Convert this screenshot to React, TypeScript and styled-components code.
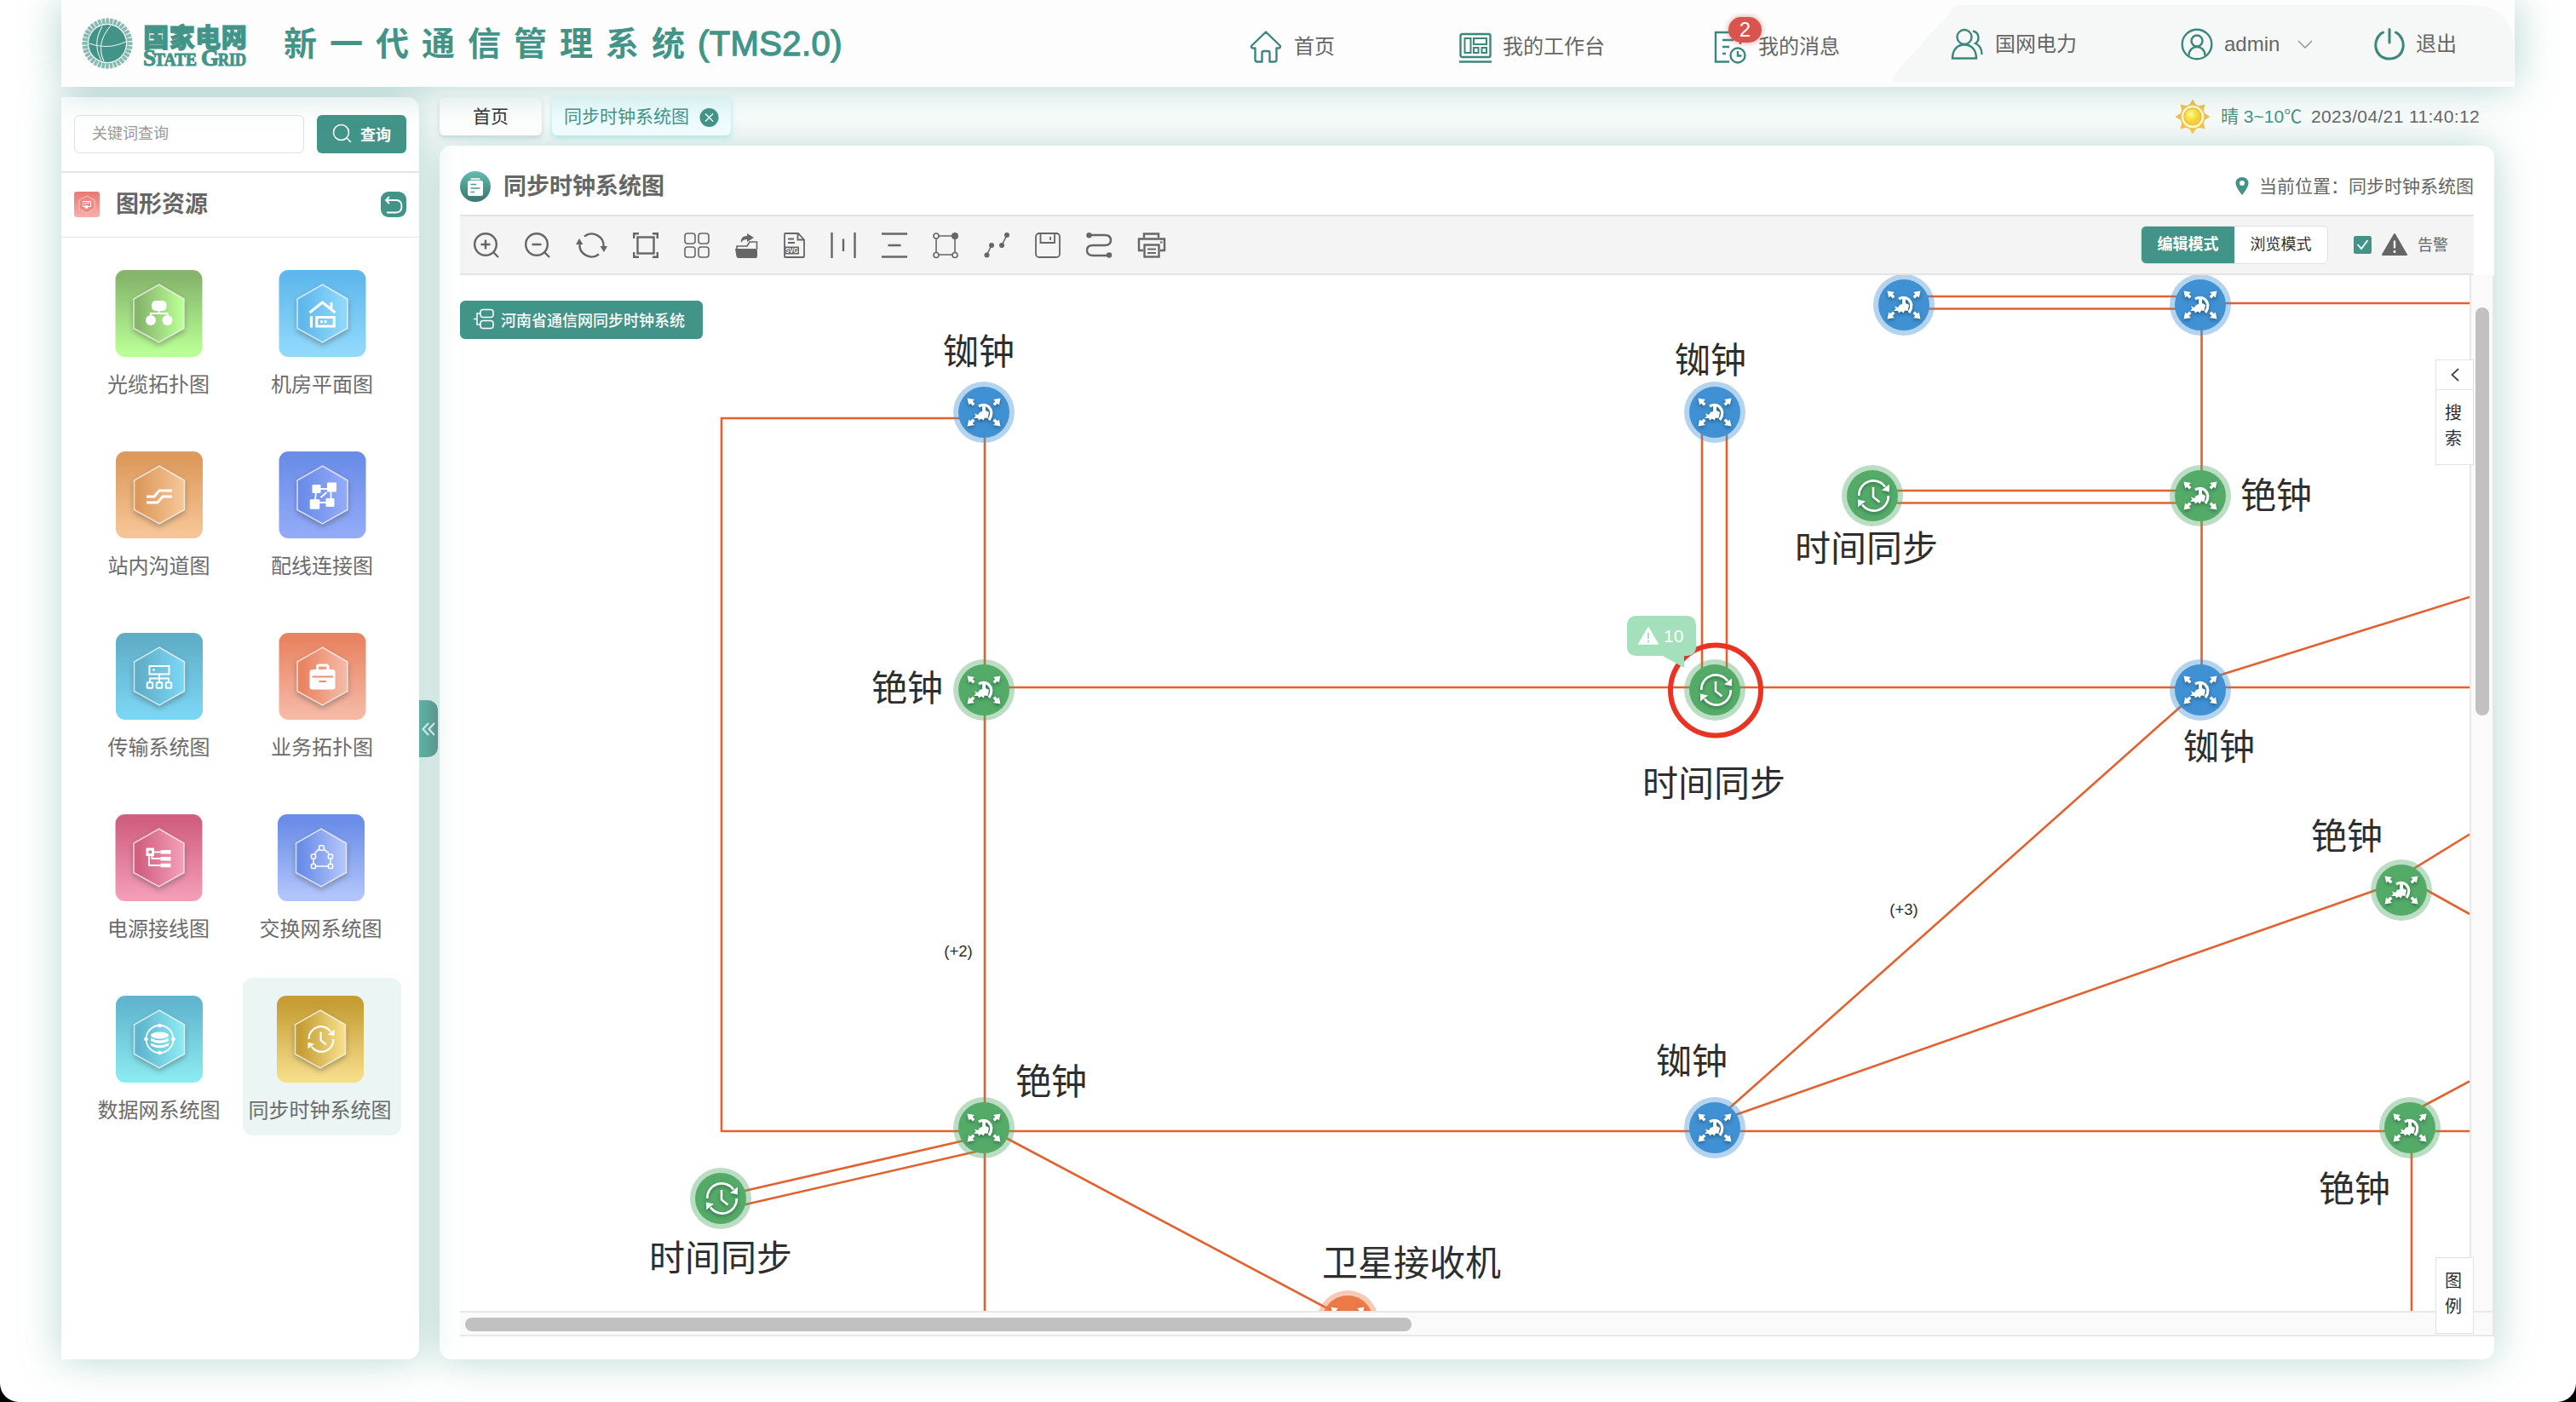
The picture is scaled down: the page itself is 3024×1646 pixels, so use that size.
import React from "react";
import styled, { createGlobalStyle, css } from "styled-components";

const TEAL = "#439488";
const INK = "#666666";

const GlobalStyle = createGlobalStyle`
  *, *::before, *::after { box-sizing: border-box; }
  html { background: #000; }
  body { margin: 0; font-family: "Liberation Sans", "Noto Sans CJK SC", sans-serif; color: ${INK}; }
`;

const Window = styled.div`
  height: 1646px;
  padding: 0 72px;
  display: flex;
  flex-direction: column;
  background: #fff;
  border-radius: 0 0 22px 22px;
  overflow: hidden;
`;

/* ---------- header ---------- */

const Header = styled.header`
  position: relative;
  z-index: 2;
  flex: none;
  height: 102px;
  display: flex;
  align-items: center;
  background: #fdfdfd;
  box-shadow: 0 0 48px rgba(67, 149, 136, 0.42);
`;

const Logo = styled.svg`
  flex: none;
  width: 200px;
  height: 80px;
  margin-left: 20px;
`;

const SystemTitle = styled.h1`
  margin: 0 0 0 41px;
  width: 1134px;
  font-size: 39px;
  line-height: 60px;
  font-weight: 700;
  color: ${TEAL};
  white-space: nowrap;
`;

const SpacedName = styled.span`
  letter-spacing: 15px;
`;

const Version = styled.span`
  font-size: 40px;
  font-weight: 400;
  -webkit-text-stroke: 1.3px ${TEAL};
  letter-spacing: 0.4px;
`;

const NavLink = styled.a<{ $gap: number; $width: number }>`
  flex: none;
  width: ${(p) => p.$width}px;
  display: flex;
  align-items: center;
  gap: ${(p) => p.$gap}px;
  margin-top: 8px;
  font-size: 24px;
  line-height: 36px;
  white-space: nowrap;
`;

const HeaderIcon = styled.svg`
  flex: none;
  width: 38px;
  height: 38px;
  fill: none;
  stroke: #3b877c;
  stroke-width: 2.4;
  overflow: visible;
`;

const IconHolder = styled.span`
  position: relative;
  display: flex;
`;

const Badge = styled.b`
  position: absolute;
  left: 17px;
  top: -16px;
  width: 39px;
  height: 30px;
  border-radius: 15px;
  background: #d9534f;
  box-shadow: 0 0 6px rgba(217, 83, 79, 0.6);
  color: #fff;
  font-size: 24px;
  font-weight: 400;
  line-height: 30px;
  text-align: center;
`;

const UserArea = styled.div`
  position: relative;
  flex: 1;
  height: 90px;
  display: flex;
  align-items: center;
  padding-left: 69px;
`;

const UserShape = styled.svg`
  position: absolute;
  left: 0;
  top: 0;
  width: 730px;
  height: 90px;
`;

const UserLink = styled.a<{ $width: number; $gap?: number }>`
  position: relative;
  flex: none;
  width: ${(p) => p.$width}px;
  display: flex;
  align-items: center;
  gap: ${(p) => p.$gap ?? 14}px;
  font-size: 24px;
  line-height: 36px;
  margin-top: 2px;
  white-space: nowrap;
`;

const Caret = styled.svg`
  width: 18px;
  height: 10px;
  margin-left: 8px;
  fill: none;
  stroke: #999;
  stroke-width: 1.6;
`;

/* ---------- body ---------- */

const Body = styled.div`
  flex: none;
  display: flex;
  height: 1544px;
  padding: 12px 0 50px;
  gap: 24px;
`;

const Sidebar = styled.aside`
  position: relative;
  flex: none;
  width: 420px;
  display: flex;
  flex-direction: column;
  background: #fff;
  border-radius: 0 14px 14px 0;
  box-shadow: 0 0 48px rgba(67, 149, 136, 0.38);
`;

const SearchRow = styled.div`
  display: flex;
  gap: 15px;
  padding: 21px 15px;
  height: 89px;
  border-bottom: 2px solid #e4e4e4;
`;

const SearchField = styled.div`
  width: 270px;
  height: 45px;
  padding-left: 20px;
  border: 1px solid #e2e2e2;
  border-radius: 6px;
  color: #999;
  font-size: 18px;
  line-height: 43px;
`;

const SearchButton = styled.button`
  width: 105px;
  height: 45px;
  padding: 0 0 2px 18px;
  border: 0;
  border-radius: 6px;
  display: flex;
  align-items: center;
  gap: 10px;
  background: ${TEAL};
  color: #fff;
  font: 700 18px "Liberation Sans", "Noto Sans CJK SC", sans-serif;
  white-space: nowrap;
`;

const SectionHead = styled.div`
  display: flex;
  align-items: center;
  height: 76px;
  padding: 0 15px 2px;
  border-bottom: 1.5px solid #e4e4e4;
`;

const SectionTitle = styled.h2`
  flex: 1;
  margin: 0 0 0 19px;
  font-size: 27px;
  line-height: 40px;
  font-weight: 700;
  color: ${INK};
`;

const Square30 = styled.svg`
  flex: none;
  width: 30px;
  height: 30px;
`;

const TileGrid = styled.div`
  display: grid;
  grid-template-columns: 186px 186px;
  grid-auto-rows: 185px;
  gap: 28px 5px;
  padding: 17px 0 0 22px;
`;

const TileCell = styled.div<{ $active?: boolean; $shift: number }>`
  display: flex;
  flex-direction: column;
  align-items: center;
  padding-top: 21px;
  border-radius: 12px;
  font-size: 24px;
  line-height: 36px;
  color: #6c6c6c;
  white-space: nowrap;
  ${(p) => p.$active && css`background: #ebf5f3;`}
  > * {
    transform: translateX(${(p) => p.$shift}px);
  }
`;

const TileArt = styled.svg`
  width: 103px;
  height: 102px;
  margin-bottom: 15px;
  display: block;
`;

const CollapseHandle = styled.div`
  position: absolute;
  left: 420px;
  top: 708px;
  width: 22px;
  height: 67px;
  border-radius: 0 12px 12px 0;
  background: linear-gradient(90deg, #5eb2a6, #5c958c);
  display: flex;
  align-items: center;
  justify-content: center;
`;

/* ---------- content ---------- */

const Content = styled.main`
  flex: none;
  width: 2412px;
  display: flex;
  flex-direction: column;
  gap: 12px;
`;

const TabRow = styled.div`
  position: relative;
  z-index: 1;
  display: flex;
  align-items: center;
  height: 45px;
  gap: 12px;
`;

const Tab = styled.div<{ $active?: boolean }>`
  flex: none;
  width: ${(p) => (p.$active ? 210 : 120)}px;
  height: 45px;
  display: flex;
  align-items: center;
  justify-content: center;
  gap: 12px;
  border-radius: 6px;
  font-size: 21px;
  line-height: 44px;
  white-space: nowrap;
  color: ${(p) => (p.$active ? TEAL : "#303030")};
  background: ${(p) => (p.$active ? "#effdff" : "#fefefe")};
  box-shadow: 0 3px 6px ${(p) => (p.$active ? "rgba(110, 220, 215, 0.5)" : "rgba(67, 149, 136, 0.28)")};
`;

const Weather = styled.div`
  flex: 1;
  display: flex;
  align-items: center;
  justify-content: flex-end;
  padding-right: 17px;
  font-size: 21px;
  line-height: 45px;
  white-space: nowrap;
`;

const Sun = styled.svg`
  width: 44px;
  height: 44px;
  margin-right: 11px;
`;

const Forecast = styled.span`
  width: 106px;
  color: ${TEAL};
`;

const Clock = styled.span`
  width: 198px;
  letter-spacing: 0.36px;
`;

const Panel = styled.section`
  flex: 1;
  display: flex;
  flex-direction: column;
  background: #fff;
  border-radius: 14px;
  box-shadow: 0 0 48px rgba(67, 149, 136, 0.38);
`;

const PanelHead = styled.div`
  height: 81px;
  display: flex;
  align-items: center;
  padding: 14px 24px 0;
`;

const PanelTitle = styled.h2`
  flex: 1;
  margin: 0 0 0 15px;
  font-size: 27px;
  line-height: 40px;
  font-weight: 700;
  color: ${INK};
`;

const Location = styled.div`
  display: flex;
  align-items: center;
  gap: 12px;
  font-size: 21px;
  line-height: 32px;
  white-space: nowrap;
`;

const Toolbar = styled.div`
  flex: none;
  margin: 0 24px;
  height: 71px;
  display: flex;
  align-items: center;
  gap: 30px;
  padding-left: 15.5px;
  background: #f4f4f4;
  border-top: 2px solid #e4e4e4;
  border-bottom: 2px solid #e4e4e4;
`;

const ToolIcon = styled.svg`
  flex: none;
  height: 30px;
  fill: none;
  stroke: ${INK};
  stroke-width: 2.4;
  overflow: visible;
`;

const ToolbarRight = styled.div`
  flex: 1;
  display: flex;
  align-items: center;
  justify-content: flex-end;
  padding-right: 30px;
`;

const Segment = styled.div`
  display: flex;
  width: 220px;
  height: 45px;
  margin-right: 1px;
  border: 1px solid #dfdfdf;
  border-radius: 6px;
  overflow: hidden;
  background: #fff;
`;

const SegmentItem = styled.div<{ $active?: boolean }>`
  flex: 1;
  text-align: center;
  font-size: 18px;
  line-height: 43px;
  ${(p) =>
    p.$active
      ? css`background: ${TEAL}; color: #fff; font-weight: 700;`
      : css`color: #303030;`}
`;

const CheckBox = styled.svg`
  width: 21px;
  height: 21px;
  margin: 0 12px 0 29px;
`;

const AlarmText = styled.span`
  margin-left: 12px;
  font-size: 18px;
  line-height: 30px;
`;

const Viewport = styled.div`
  position: relative;
  flex: none;
  height: 1246px;
  margin-left: 24px;
  display: grid;
  grid-template: 1216px 30px / 2359px 29px;
`;

const Canvas = styled.div`
  position: relative;
  overflow: hidden;
`;

const Links = styled.svg`
  position: absolute;
  inset: 0;
  fill: none;
  stroke: #e2612f;
  stroke-width: 2.6;
`;

const NodeMark = styled.svg`
  position: absolute;
  width: 72px;
  height: 72px;
`;

const NodeText = styled.span<{ $size: number }>`
  position: absolute;
  transform: translate(-50%, -50%);
  font-size: ${(p) => p.$size}px;
  line-height: ${(p) => p.$size * 1.4}px;
  color: #2e2e2e;
  white-space: nowrap;
`;

const AlertRing = styled.svg`
  position: absolute;
  left: 1417px;
  top: 430px;
  width: 114px;
  height: 114px;
`;

const Bubble = styled.div`
  position: absolute;
  left: 1370px;
  top: 400px;
  width: 81px;
  height: 47px;
  border-radius: 10px;
  background: #a4e0bc;
  display: flex;
  align-items: center;
  padding-left: 13px;
  gap: 6px;
  color: #fff;
  font-size: 21px;
  line-height: 46px;
  &::after {
    content: "";
    position: absolute;
    left: 40px;
    top: 46px;
    width: 27px;
    height: 15px;
    background: #a4e0bc;
    clip-path: polygon(0 0, 100% 0, 100% 100%);
  }
`;

const DiagramButton = styled.button`
  position: absolute;
  left: 0;
  top: 30px;
  width: 285px;
  height: 45px;
  padding: 0 0 2px 16px;
  border: 0;
  border-radius: 6px;
  display: flex;
  align-items: center;
  gap: 8px;
  background: ${TEAL};
  color: #fff;
  font: 500 18px "Liberation Sans", "Noto Sans CJK SC", sans-serif;
  white-space: nowrap;
`;

const VTrack = styled.div`
  border: solid #e8e8e8;
  border-width: 0 2px;
  background: #fafafa;
  padding: 38px 0 0 5px;
`;

const HTrack = styled.div`
  grid-column: 1 / 3;
  border: solid #e8e8e8;
  border-width: 2px 2px 2px 0;
  background: #fafafa;
  padding: 6px 0 0 6px;
`;

const Thumb = styled.div<{ $w: number; $h: number }>`
  width: ${(p) => p.$w}px;
  height: ${(p) => p.$h}px;
  border-radius: 8px;
  background: #c1c1c1;
`;

const SideFlap = styled.div<{ $top: number }>`
  position: absolute;
  left: 2319px;
  top: ${(p) => p.$top}px;
  width: 45px;
  border: 1px solid #e2e2e2;
  background: #fff;
  color: #303030;
`;

const FlapToggle = styled.div`
  height: 35px;
  display: flex;
  align-items: center;
  justify-content: center;
  border-bottom: 1px solid #e2e2e2;
`;

const FlapText = styled.div<{ $pad: number; $height: number }>`
  height: ${(p) => p.$height}px;
  padding: ${(p) => p.$pad}px 12px 0 9px;
  font-size: 20px;
  line-height: 29.5px;
  text-align: center;
`;

/* ---------- header drawings ---------- */

function GridLogo() {
  const ticks = Array.from({ length: 36 }, (_, i) => i * 10);
  return (
    <Logo viewBox="92 10 200 80">
      {ticks.map((a) => (
        <rect key={a} x="124.3" y="20.4" width="3.6" height="6.5" fill="#86b9b2" transform={`rotate(${a} 126 50)`} />
      ))}
      <circle cx="126" cy="50" r="22" fill={TEAL} />
      <g fill="none" stroke="#fff" strokeWidth="1.100">
        <path d="M120 30 Q108 50 119 70 M130 29 Q112 50 122 71 M104.500 50 Q126 58 147.500 48" opacity=".85" />
      </g>
      <text x="168" y="53.500" fontFamily="'Noto Sans CJK SC', sans-serif" fontSize="31" fontWeight="900" stroke={TEAL} strokeWidth=".8" textLength="122" lengthAdjust="spacingAndGlyphs" fill={TEAL}>国家电网</text>
      <text y="75.500" fontFamily="'Liberation Serif', serif" fontWeight="700" fill={TEAL} stroke={TEAL} strokeWidth="1">
        <tspan x="168" fontSize="27">S</tspan>
        <tspan x="181" fontSize="20" textLength="50" lengthAdjust="spacingAndGlyphs">TATE</tspan>
        <tspan x="236" fontSize="27">G</tspan>
        <tspan x="256" fontSize="20" textLength="33" lengthAdjust="spacingAndGlyphs">RID</tspan>
      </text>
    </Logo>
  );
}

const HomeIcon = () => (
  <HeaderIcon viewBox="0 0 38 38" strokeLinejoin="round" strokeWidth="2">
    <path d="M19 1.500 L36 18 Q36.500 21 31.500 20.500 V34 Q31.500 36.500 29 36.500 H23.500 V26 Q23.500 24 21.500 24 H16.500 Q14.500 24 14.500 26 V36.500 H9 Q6.500 36.500 6.500 34 V20.500 Q1 21 2 18 Z" />
  </HeaderIcon>
);

const DeskIcon = () => (
  <HeaderIcon viewBox="0 0 38 38">
    <rect x="1.500" y="4" width="35" height="27" rx="2" />
    <path d="M0 36.500 H38" />
    <rect x="6.500" y="9" width="7" height="17" strokeWidth="2" />
    <path d="M17 9 H32 V16 H17 Z M17 20 H22.500 V26 H17 Z M26.500 20 H32 V26 H26.500 Z" strokeWidth="2" />
  </HeaderIcon>
);

const MessageIcon = () => (
  <HeaderIcon viewBox="0 0 38 38">
    <path d="M18 36.500 H2 V2 H31 V16 M10 11 H23 M10 19 H18 M10 27 H14" />
    <circle cx="28" cy="29" r="8.500" />
    <path d="M28 24 V29.500 H32.500" />
  </HeaderIcon>
);

const UsersIcon = () => (
  <HeaderIcon viewBox="0 0 38 38">
    <circle cx="16" cy="10.500" r="8.500" />
    <path d="M2 35.500 C2 25 8 19.500 16 19.500 C24 19.500 30 25 30 35.500 Z" />
    <path d="M26 3.500 C34 5 34 15 29 18 C34 20 36.500 25 36.500 31" />
  </HeaderIcon>
);

const AvatarIcon = () => (
  <HeaderIcon viewBox="0 0 38 38">
    <circle cx="19" cy="19" r="17.300" />
    <circle cx="19" cy="15" r="6.500" />
    <path d="M9.500 32.500 C9.500 18.500 28.500 18.500 28.500 32.500" />
  </HeaderIcon>
);

const PowerIcon = () => (
  <HeaderIcon viewBox="0 0 38 38" strokeLinecap="round">
    <path d="M19 1.500 V17 M11.500 5 C-2 12 0 36 19 36 C38 36 40 12 26.500 5" style={{ strokeWidth: 3 }} />
  </HeaderIcon>
);

function SunIcon() {
  return (
    <Sun viewBox="-22 -22 44 44">
      <defs>
        <radialGradient id="sun" cx="40%" cy="35%">
          <stop offset="0" stopColor="#ffffb0" />
          <stop offset=".5" stopColor="#ffe944" />
          <stop offset="1" stopColor="#f7cf3a" />
        </radialGradient>
      </defs>
      {[0, 45, 90, 135, 180, 225, 270, 315].map((a) => (
        <path key={a} d="M-4.500 -13 L0 -20.500 L4.500 -13 Z" fill="#f2c04b" transform={`rotate(${a})`} />
      ))}
      <circle r="14" fill="#fff9cf" stroke="#f4c64f" strokeWidth="1.600" />
      <circle r="10" fill="url(#sun)" stroke="#eebb3c" strokeWidth="1.200" />
    </Sun>
  );
}

/* ---------- sidebar tiles ---------- */

const ClockArrows = () => (
  <g fill="none" stroke="#fff" strokeWidth="2.600">
    <path d="M-17.300 0 A17 17 0 0 1 13.500 -10.500 M17.300 0 A17 17 0 0 1 -13.500 10.500" />
    <path d="M-.5 -10 V1.500 L7 7.500" />
    <path d="M18.500 -13.500 V-4.500 L9.500 -6.500 Z M-18.500 13.500 V4.500 L-9.500 6.500 Z" fill="#fff" stroke="none" />
  </g>
);

const Sq = ({ x, y, s = 7 }: { x: number; y: number; s?: number }) => (
  <rect x={x - s / 2} y={y - s / 2} width={s} height={s} rx="1" />
);

type Tile = { name: string; from: string; to: string; shift: number; art: React.ReactNode };

const tiles: Tile[] = [
  {
    name: "光缆拓扑图", from: "#86b56c", to: "#b9ff95", shift: -1,
    art: (
      <g fill="#fff">
        <rect x="42.500" y="36" width="17.500" height="12" rx="5" />
        <circle cx="41.500" cy="59" r="6" />
        <circle cx="61" cy="59" r="6" />
        <path d="M51 47 V51 M41.500 55 V51 H61 V55" fill="none" stroke="#fff" strokeWidth="2" />
      </g>
    ),
  },
  {
    name: "机房平面图", from: "#5fb8ec", to: "#91d9fb", shift: 0,
    art: (
      <g fill="none" stroke="#fff">
        <path d="M36 50 L51 38 L66 50" strokeWidth="3" />
        <path d="M61.500 38 V46" strokeWidth="3" />
        <path d="M38 54 V67.500" strokeWidth="3.200" />
        <rect x="44.300" y="55.500" width="20.500" height="10.500" strokeWidth="3" />
        <path d="M48.500 60.700 H56.500" strokeWidth="3" strokeDasharray="3 1.500" />
      </g>
    ),
  },
  {
    name: "站内沟道图", from: "#dd9a5c", to: "#f6c596", shift: -0.5,
    art: <path d="M36 53 H45 L51 46 H66 M36 60 H49 L55 53 H66" fill="none" stroke="#fff" strokeWidth="3" />,
  },
  {
    name: "配线连接图", from: "#6b8de8", to: "#93aaf9", shift: 0,
    art: (
      <g fill="#fff">
        <path d="M44 44 H61 V60 H42 Z M49 54 L56 48" fill="none" stroke="#fff" strokeWidth="1.800" />
        <Sq x={44} y={44} s={10} />
        <Sq x={62} y={42} s={11} />
        <Sq x={42} y={62} s={11.5} />
        <Sq x={60} y={60} s={10} />
      </g>
    ),
  },
  {
    name: "传输系统图", from: "#60aec8", to: "#7bd6f3", shift: -0.5,
    art: (
      <g fill="none" stroke="#fff" strokeWidth="2">
        <rect x="39.500" y="39" width="23" height="9.500" />
        <path d="M43 43.500 H46 M51 48.500 V58 M40 58 V53.500 H62 V58" />
        <Sq x={40} y={61.5} s={6.5} />
        <Sq x={51} y={61.5} s={6.5} />
        <Sq x={62} y={61.5} s={6.5} />
      </g>
    ),
  },
  {
    name: "业务拓扑图", from: "#e98462", to: "#f5b9a6", shift: 0,
    art: (
      <g>
        <rect x="36" y="43" width="30" height="23.500" rx="3" fill="#fff" />
        <path d="M45 43 V40 Q45 38 47 38 H55.500 Q57.500 38 57.500 40 V43" fill="none" stroke="#fff" strokeWidth="3.200" />
        <path d="M39 51.500 H63.500 M47 57 H55.500" stroke="#ea9071" strokeWidth="1.800" />
      </g>
    ),
  },
  {
    name: "电源接线图", from: "#d15f80", to: "#f39db7", shift: -1,
    art: (
      <g fill="none" stroke="#fff" strokeWidth="1.800">
        <rect x="37.500" y="41" width="6.500" height="6.500" strokeWidth="3" />
        <path d="M44 44.300 H53 M43 47 V52 H53 M39.500 47 V60 H53" />
        <path d="M53 44.300 H65 M53 52.200 H65 M53 60 H65" strokeWidth="4.600" />
      </g>
    ),
  },
  {
    name: "交换网系统图", from: "#6b8de8", to: "#b2c5fb", shift: -1.5,
    art: (
      <g fill="none" stroke="#fff" strokeWidth="1.600">
        <path d="M48 41 L43.500 46 M54.500 41 L60 46 M42 53 V58 M62 53 V58 M45 61 H59" />
        <Sq x={51.5} y={39.5} s={5.5} />
        <Sq x={42} y={49.5} s={5} />
        <Sq x={62} y={49.5} s={5} />
        <Sq x={42} y={61} s={5} />
        <Sq x={62} y={61} s={5} />
      </g>
    ),
  },
  {
    name: "数据网系统图", from: "#60b6ce", to: "#8be9f0", shift: -0.5,
    art: (
      <g fill="#fff">
        <circle cx="51.500" cy="51" r="16" fill="none" stroke="#fff" strokeWidth="1.800" />
        <circle cx="51.500" cy="35" r="2.300" />
        <circle cx="51.500" cy="67" r="2.300" />
        <circle cx="35.500" cy="51" r="2.300" />
        <circle cx="67.500" cy="51" r="2.300" />
        <ellipse cx="51.500" cy="46.500" rx="10.500" ry="4" />
        <path d="M41 49.500 Q51.500 55.500 62 49.500 V53 Q51.500 59 41 53 Z M41 55.500 Q51.500 61 62 55.500 V58.500 Q51.500 64 41 58.500 Z" />
      </g>
    ),
  },
  {
    name: "同步时钟系统图", from: "#c59d33", to: "#f6dd8a", shift: -2.5,
    art: <g transform="translate(52 51) scale(.84)"><ClockArrows /></g>,
  },
];

function TileIcon({ tile, id }: { tile: Tile; id: string }) {
  return (
    <TileArt viewBox="0 0 102 102">
      <defs>
        <linearGradient id={`bg-${id}`} x1="0" y1="0" x2="0" y2="1">
          <stop offset=".08" stopColor={tile.from} />
          <stop offset=".95" stopColor={tile.to} />
        </linearGradient>
        <linearGradient id={`hex-${id}`}>
          <stop offset=".1" stopColor={tile.from} />
          <stop offset=".95" stopColor={tile.to} />
        </linearGradient>
      </defs>
      <rect width="102" height="102" rx="11" fill={`url(#bg-${id})`} />
      <path
        d="M51 17 L80.500 34 V68.500 L51 85 L21.500 68.500 V34 Z"
        fill={`url(#hex-${id})`}
        stroke="rgba(255,255,255,.72)"
        strokeWidth="1.500"
        style={{ filter: "drop-shadow(0 3px 3px rgba(60,60,60,.4))" }}
      />
      {tile.art}
    </TileArt>
  );
}

/* ---------- toolbar icons ---------- */

const F = { fill: INK, stroke: "none" } as const;

const tools: { w: number; art: React.ReactNode }[] = [
  { w: 30, art: <><circle cx="14" cy="14" r="12.800" /><path d="M14 8.500 V19.500 M8.500 14 H19.500 M23 23 L29 29" /></> },
  { w: 30, art: <><circle cx="14" cy="14" r="12.800" /><path d="M8.500 14 H19.500 M23 23 L29 29" /></> },
  {
    w: 37,
    art: <><path d="M10 4.500 A14 14 0 0 1 32.500 17 M27 25.500 A14 14 0 0 1 4.500 13" /><path {...F} d="M28.500 16 H37 L33 23 Z M8.500 14 H0 L4 7 Z" /></>,
  },
  { w: 30, art: <><path d="M1.200 7 V1.200 H7 M23 1.200 H28.800 V7 M28.800 23 V28.800 H23 M7 28.800 H1.200 V23" /><rect x="5.500" y="5.500" width="19" height="19" /></> },
  {
    w: 30,
    art: <g strokeWidth="1.600"><rect x="1" y="1" width="12" height="12" rx="3" /><rect x="17" y="1" width="12" height="12" rx="3" /><rect x="1" y="17" width="12" height="12" rx="3" /><rect x="17" y="17" width="12" height="12" rx="3" /></g>,
  },
  {
    w: 27,
    art: <><path {...F} d="M0 19 H24 L26 21 V28 Q26 30 24 30 H4 Q2 30 1.500 28 Z M14 1 L22 6 L14 11 V8 Q9 8 7 12 Q6 4 14 4 Z" /><path d="M2 19 V16 H14 L17 11 H25.500 V20" strokeWidth="1.600" /></>,
  },
  {
    w: 25,
    art: <><path d="M1 28 V2 Q1 1 2 1 H17 L24 8.500 V28 Q24 29 23 29 H2 Q1 29 1 28 Z M16.500 1.500 V8.500 H23.500" strokeWidth="1.800" /><path d="M5 7.500 H12 M5 12 H13" strokeWidth="1.800" /><rect {...F} x="1" y="16.500" width="17" height="9" /><text x="2" y="24.200" fontSize="8.500" fontWeight="700" fill="#fff" stroke="none" textLength="15" lengthAdjust="spacingAndGlyphs">SVG</text></>,
  },
  { w: 30, art: <path d="M1.500 0 V30 M28.500 0 V30 M15 7.500 V22" /> },
  { w: 30, art: <path d="M0 1.500 H30 M0 28.500 H30 M7.500 15 H22.500" /> },
  {
    w: 30,
    art: <g strokeWidth="1.600"><path d="M4 4 H26 V26 H4 Z" /><circle cx="4" cy="4" r="3" fill="#f4f4f4" /><circle {...F} cx="26" cy="4" r="4" /><circle cx="4" cy="26.500" r="3" fill="#f4f4f4" /><circle cx="26" cy="26.500" r="3" fill="#f4f4f4" /></g>,
  },
  {
    w: 30,
    art: <><path d="M3 27 L9 15 M21 15 L27 3" strokeWidth="1.600" /><circle {...F} cx="3.500" cy="26.500" r="3" /><circle {...F} cx="9" cy="15" r="3" /><circle {...F} cx="21" cy="15" r="3" /><circle {...F} cx="27" cy="3" r="3" /></>,
  },
  { w: 30, art: <g strokeWidth="1.800"><rect x="1" y="1" width="28" height="28" rx="4" /><path d="M6.500 1 V12 H23 V1 M18 5 V9" /></g> },
  {
    w: 30,
    art: <><path d="M3 3 H22 Q29 3 29 9 Q29 15 22 15 H8 Q1 15 1 21 Q1 27 8 27 H26" /><circle {...F} cx="3.500" cy="3.200" r="3.200" /><circle {...F} cx="27" cy="26.500" r="3.200" /></>,
  },
  {
    w: 34,
    art: <><path d="M8 6 V1.500 H25 V6 M7 21 H2 V7.500 H32 V21 H27" /><rect x="8.500" y="14.500" width="17" height="14" /><path d="M12 19.500 H22 M12 24 H22 M27 11.500 H29.500" strokeWidth="2" /></>,
  },
];

const WarningIcon = ({ size, color, mark }: { size: number; color: string; mark: string }) => (
  <svg width={size} height={size * 0.87} viewBox="0 0 30 26">
    <path d="M15 1 L29 25 H1 Z" fill={color} stroke={color} strokeWidth="2" strokeLinejoin="round" />
    <path d="M15 8.500 V17.500 M15 20 V23" stroke={mark} strokeWidth="2.400" />
  </svg>
);

/* ---------- diagram ---------- */

type NodeKind = "router" | "clock";
const BLUE = "#4090d4";
const GREEN = "#54ab68";
const ORANGE = "#ec7a47";

const nodes: { x: number; y: number; color: string; kind: NodeKind }[] = [
  { x: 615, y: 161, color: BLUE, kind: "router" },
  { x: 1695, y: 35, color: BLUE, kind: "router" },
  { x: 2043, y: 35, color: BLUE, kind: "router" },
  { x: 1658, y: 259, color: GREEN, kind: "clock" },
  { x: 2043, y: 259, color: GREEN, kind: "router" },
  { x: 2043, y: 487, color: BLUE, kind: "router" },
  { x: 1473, y: 161, color: BLUE, kind: "router" },
  { x: 1473, y: 487, color: GREEN, kind: "clock" },
  { x: 615, y: 487, color: GREEN, kind: "router" },
  { x: 615, y: 1001, color: GREEN, kind: "router" },
  { x: 306, y: 1084, color: GREEN, kind: "clock" },
  { x: 1473, y: 1001, color: BLUE, kind: "router" },
  { x: 2279, y: 722, color: GREEN, kind: "router" },
  { x: 2289, y: 1001, color: GREEN, kind: "router" },
  { x: 1042, y: 1228, color: ORANGE, kind: "router" },
];

const labels: { x: number; y: number; text: string; size?: number }[] = [
  { x: 609, y: 91, text: "铷钟" },
  { x: 1468, y: 101, text: "铷钟" },
  { x: 1651, y: 322, text: "时间同步" },
  { x: 2132, y: 260, text: "铯钟" },
  { x: 2065, y: 555, text: "铷钟" },
  { x: 1472, y: 598, text: "时间同步" },
  { x: 525, y: 486, text: "铯钟" },
  { x: 694, y: 948, text: "铯钟" },
  { x: 306, y: 1155, text: "时间同步" },
  { x: 1446, y: 924, text: "铷钟" },
  { x: 2215, y: 660, text: "铯钟" },
  { x: 2224, y: 1074, text: "铯钟" },
  { x: 1117, y: 1161, text: "卫星接收机" },
  { x: 585, y: 794, text: "(+2)", size: 18.5 },
  { x: 1695, y: 745, text: "(+3)", size: 18.5 },
];

const linkPath = [
  "M615 168 H307 V1005 H2359",
  "M616 161 V1216",
  "M615 484 H2359",
  "M1458 161 V487 M1487 161 V487",
  "M1695 25 H2043 M1695 39.500 H2043 M2043 33 H2359",
  "M2044.500 35 V487",
  "M1658 253 H2043 M1658 267.500 H2043",
  "M2060 471.500 L2359 378",
  "M2026 501 L1489 979",
  "M2255 720 L1497 986",
  "M2290 699 L2359 656.500 M2305 720 L2359 750",
  "M2300 978 L2359 946.500 M2291 1001 V1216",
  "M330 1076 L592 1016 M331 1092 L610 1028",
  "M640 1012.500 L1018 1213",
].join(" ");

function DiagramNode({ x, y, color, kind }: { x: number; y: number; color: string; kind: NodeKind }) {
  return (
    <NodeMark viewBox="-36 -36 72 72" style={{ left: x - 36, top: y - 36 }}>
      <circle r="36" fill={color} opacity=".4" />
      <circle r="30" fill={color} />
      <g style={{ filter: "drop-shadow(0 2px 2px rgba(0,40,30,.45))" }}>
        {kind === "clock" ? (
          <g transform="translate(1.500 0)"><ClockArrows /></g>
        ) : (
          <g fill="#fff">
            {[[1, 1], [-1, 1], [1, -1], [-1, -1]].map(([sx, sy]) => (
              <path key={`${sx}${sy}`} transform={`scale(${sx} ${sy})`} d="M19.500 16.500 L17.800 8.500 L15.800 10.300 L13 7.500 L10.500 10 L13.300 12.800 L11 15 Z" />
            ))}
            <path d="M-6 -7 Q0 -10.500 5.500 -6.500 Q12 0 6 9" fill="none" stroke="#fff" strokeWidth="3.200" />
            <path d="M-2 -9 H2 V-2 L6 0 L4.500 7 L1 6.500 L-.5 9.500 L-3 7.500 L-6 9.500 L-7 7 L-12 7 L-9.500 4.500 L-11 1.500 L-7 3 L-5 0 L-2 -1 Z" />
          </g>
        )}
      </g>
    </NodeMark>
  );
}

function Diagram() {
  return (
    <Viewport>
      <Canvas>
        <Links width="2359" height="1216" viewBox="0 0 2359 1216">
          <path d={linkPath} />
        </Links>
        {nodes.map((n) => (
          <DiagramNode key={`${n.x}-${n.y}`} {...n} />
        ))}
        <AlertRing viewBox="0 0 114 114">
          <circle cx="57" cy="57.500" r="53" fill="none" stroke="#ea3323" strokeWidth="6" />
        </AlertRing>
        {labels.map((l) => (
          <NodeText key={`${l.x}-${l.y}`} $size={l.size ?? 42} style={{ left: l.x, top: l.y }}>
            {l.text}
          </NodeText>
        ))}
        <Bubble>
          <WarningIcon size={24} color="#fff" mark="#a4e0bc" />
          <span>10</span>
        </Bubble>
        <DiagramButton>
          <svg width="24" height="25" viewBox="0 0 24 25" fill="none" stroke="#fff" strokeWidth="1.500">
            <rect x="8" y="1.500" width="15" height="9" rx="3" />
            <rect x="8" y="14.500" width="15" height="9" rx="3" />
            <path d="M8 6 H4 V19 H8 M0 12.500 H4" />
          </svg>
          河南省通信网同步时钟系统
        </DiagramButton>
      </Canvas>
      <VTrack>
        <Thumb $w={16} $h={479} />
      </VTrack>
      <HTrack>
        <Thumb $w={1111} $h={16} />
      </HTrack>
      <SideFlap $top={99}>
        <FlapToggle>
          <svg width="10" height="16" viewBox="0 0 10 16" fill="none" stroke="#444" strokeWidth="1.800">
            <path d="M9 1 L1.500 8 L9 15" />
          </svg>
        </FlapToggle>
        <FlapText $pad={13} $height={87}>搜索</FlapText>
      </SideFlap>
      <SideFlap $top={1153}>
        <FlapText $pad={13} $height={88}>图例</FlapText>
      </SideFlap>
    </Viewport>
  );
}

/* ---------- page ---------- */

export default function App() {
  return (
    <>
      <GlobalStyle />
      <Window>
        <Header>
          <GridLogo />
          <SystemTitle>
            <SpacedName>新一代通信管理系统</SpacedName>
            <Version>(TMS2.0)</Version>
          </SystemTitle>
          <NavLink $width={246} $gap={14}><HomeIcon />首页</NavLink>
          <NavLink $width={299} $gap={13}><DeskIcon />我的工作台</NavLink>
          <NavLink $width={209} $gap={14}>
            <IconHolder><MessageIcon /><Badge>2</Badge></IconHolder>
            我的消息
          </NavLink>
          <UserArea>
            <UserShape viewBox="0 0 730 90">
              <path d="M70 7 Q73 0 80 0 H680 Q722 0 730 40 V90 H5 Q-2 90 1 83 Z" fill="#f5f8f7" />
            </UserShape>
            <UserLink $width={270}><UsersIcon />国网电力</UserLink>
            <UserLink $width={226} $gap={13}>
              <AvatarIcon />admin
              <Caret viewBox="0 0 18 10"><path d="M1 1 L9 9 L17 1" /></Caret>
            </UserLink>
            <UserLink $width={110} $gap={12}><PowerIcon />退出</UserLink>
          </UserArea>
        </Header>

        <Body>
          <Sidebar>
            <SearchRow>
              <SearchField>关键词查询</SearchField>
              <SearchButton>
                <svg width="23" height="23" viewBox="0 0 23 23" fill="none" stroke="#fff" strokeWidth="1.500">
                  <circle cx="10.500" cy="10.500" r="9" />
                  <path d="M17 17 L22 22" />
                </svg>
                查询
              </SearchButton>
            </SearchRow>
            <SectionHead>
              <Square30 viewBox="0 0 30 30">
                <defs>
                  <linearGradient id="head-tile" x1="0" y1="0" x2="0" y2="1">
                    <stop offset="0" stopColor="#ea7773" />
                    <stop offset="1" stopColor="#f6b1ae" />
                  </linearGradient>
                </defs>
                <rect width="30" height="30" rx="3" fill="url(#head-tile)" />
                <path d="M15 5 L24 10 V20 L15 25 L6 20 V10 Z" fill="#ee8884" stroke="#fbd5d3" strokeWidth=".8" />
                <path d="M10.500 11.500 H19.500 V17.500 H10.500 Z M12 15 L14.500 13.500 L18 13" fill="none" stroke="#fff" strokeWidth="1" />
                <circle cx="14.500" cy="18" r="2" fill="#fff" />
              </Square30>
              <SectionTitle>图形资源</SectionTitle>
              <Square30 viewBox="0 0 30 30">
                <rect width="30" height="30" rx="9" fill={TEAL} />
                <path d="M10 6 L6 10 L10 14 M6 10 H18 Q24.500 10 24.500 17 Q24.500 24.500 18 24.500 H7" fill="none" stroke="#fff" strokeWidth="1.800" />
              </Square30>
            </SectionHead>
            <TileGrid>
              {tiles.map((t, i) => (
                <TileCell key={t.name} $shift={t.shift} $active={i === tiles.length - 1}>
                  <TileIcon tile={t} id={String(i)} />
                  <span>{t.name}</span>
                </TileCell>
              ))}
            </TileGrid>
            <CollapseHandle>
              <svg width="16" height="16" viewBox="0 0 16 16" fill="none" stroke="#d5ebe7" strokeWidth="2">
                <path d="M8 1 L1.500 8 L8 15 M15 1 L8.500 8 L15 15" />
              </svg>
            </CollapseHandle>
          </Sidebar>

          <Content>
            <TabRow>
              <Tab>首页</Tab>
              <Tab $active>
                同步时钟系统图
                <svg width="23" height="24" viewBox="0 0 23 24">
                  <circle cx="11.500" cy="13" r="11" fill={TEAL} />
                  <path d="M7 8.500 L16 17.500 M16 8.500 L7 17.500" stroke="#fff" strokeWidth="1.500" />
                </svg>
              </Tab>
              <Weather>
                <SunIcon />
                <Forecast>晴 3~10℃</Forecast>
                <Clock>2023/04/21 11:40:12</Clock>
              </Weather>
            </TabRow>

            <Panel>
              <PanelHead>
                <svg width="36" height="36" viewBox="0 0 36 36">
                  <defs>
                    <linearGradient id="title-disc" x1="0" y1="0" x2="0" y2="1">
                      <stop offset="0" stopColor="#62bdb0" />
                      <stop offset="1" stopColor="#39766d" />
                    </linearGradient>
                  </defs>
                  <circle cx="18" cy="18" r="18" fill="url(#title-disc)" />
                  <rect x="12.500" y="8" width="11" height="2.200" fill="#d9efec" />
                  <rect x="9" y="11" width="18" height="18" rx="2.500" fill="#fff" />
                  <path d="M12.500 15.500 H19 M12.500 20 H23.500 M12.500 24.500 H17" stroke="#469c90" strokeWidth="1.500" />
                </svg>
                <PanelTitle>同步时钟系统图</PanelTitle>
                <Location>
                  <svg width="16" height="21" viewBox="0 0 16 21">
                    <path d="M8 0 C12.500 0 15.500 3 15.500 7.200 C15.500 12 8 21 8 21 C8 21 .5 12 .5 7.200 C.5 3 3.500 0 8 0 Z" fill={TEAL} />
                    <circle cx="8" cy="7" r="3" fill="#fff" />
                  </svg>
                  当前位置：同步时钟系统图
                </Location>
              </PanelHead>
              <Toolbar>
                {tools.map((t, i) => (
                  <ToolIcon key={i} width={t.w} viewBox={`0 0 ${t.w} 30`}>{t.art}</ToolIcon>
                ))}
                <ToolbarRight>
                  <Segment>
                    <SegmentItem $active>编辑模式</SegmentItem>
                    <SegmentItem>浏览模式</SegmentItem>
                  </Segment>
                  <CheckBox viewBox="0 0 21 21">
                    <rect width="21" height="21" rx="2.500" fill={TEAL} />
                    <path d="M4.500 10 L9 15 L16.500 5" fill="none" stroke="#fff" strokeWidth="1.800" />
                  </CheckBox>
                  <WarningIcon size={30} color={INK} mark="#f4f4f4" />
                  <AlarmText>告警</AlarmText>
                </ToolbarRight>
              </Toolbar>
              <Diagram />
            </Panel>
          </Content>
        </Body>
      </Window>
    </>
  );
}
